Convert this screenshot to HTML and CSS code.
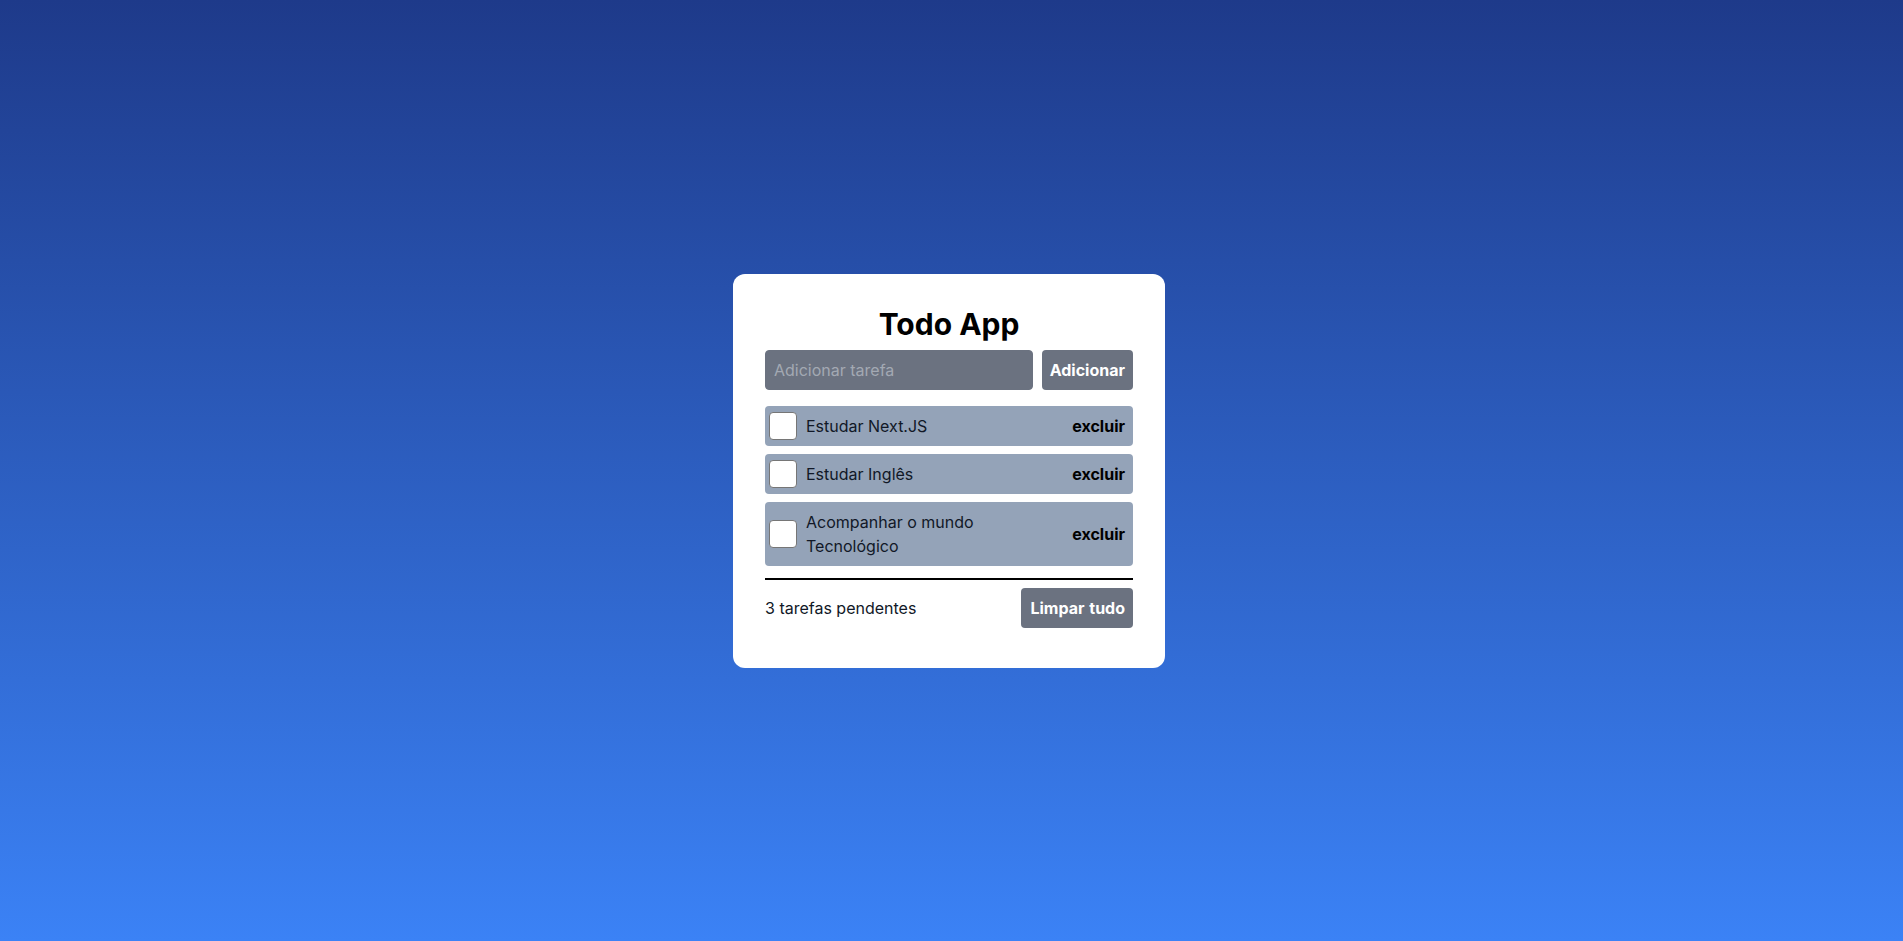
FILE: index.html
```html
<!DOCTYPE html>
<html lang="pt-BR">
<head>
<meta charset="utf-8">
<title>Todo App</title>
<link rel="stylesheet" href="styles.css">
</head>
<body>
<main class="card">
  <h1 class="title">Todo App</h1>
  <form class="add-form">
    <input class="add-input" type="text" placeholder="Adicionar tarefa">
    <button class="btn" type="button">Adicionar</button>
  </form>
  <ul class="list">
    <li class="item">
      <input class="check" type="checkbox">
      <span class="label">Estudar Next.JS</span>
      <button class="del" type="button">excluir</button>
    </li>
    <li class="item">
      <input class="check" type="checkbox">
      <span class="label">Estudar Inglês</span>
      <button class="del" type="button">excluir</button>
    </li>
    <li class="item">
      <input class="check" type="checkbox">
      <span class="label">Acompanhar o mundo Tecnológico</span>
      <button class="del" type="button">excluir</button>
    </li>
  </ul>
  <div class="footer">
    <span class="count">3 tarefas pendentes</span>
    <button class="btn btn-clear" type="button">Limpar tudo</button>
  </div>
</main>
</body>
</html>
```

FILE: styles.css
```css
* { box-sizing: border-box; }

html, body { height: 100%; }

body {
  margin: 0;
  min-height: 100vh;
  background: linear-gradient(to bottom, #1e3a8a, #3b82f6);
  display: flex;
  align-items: center;
  justify-content: center;
  font-family: Inter, "Noto Sans", sans-serif;
  font-size: 16px;
  line-height: 24px;
  color: #111827;
}

.card {
  background: #ffffff;
  border-radius: 12px;
  width: 432px;
  padding: 32px 32px 40px;
  margin-right: 5px;
}

.title {
  margin: 0 0 8px;
  font-size: 30px;
  line-height: 36px;
  font-weight: 700;
  text-align: center;
  color: #000;
}

.add-form {
  display: flex;
  gap: 9px;
  margin: 0;
}

.add-input {
  flex: 1;
  min-width: 0;
  height: 40px;
  background: #6b7280;
  border: 1px solid #6b7280;
  border-radius: 4px;
  padding: 0 8px;
  font-family: inherit;
  font-size: 16px;
  color: #fff;
  outline: none;
}

.add-input::placeholder { color: #a3a9b3; }

.btn {
  height: 40px;
  padding: 0 8px;
  background: #6b7280;
  color: #fff;
  border: none;
  border-radius: 4px;
  font-family: inherit;
  font-size: 16px;
  font-weight: 700;
}

.btn-clear { padding: 0 8px 0 9px; word-spacing: 1px; }

.list {
  list-style: none;
  margin: 16px 0 0;
  padding: 0 0 12px;
  border-bottom: 2px solid #000;
  display: flex;
  flex-direction: column;
  gap: 8px;
}

.item {
  display: flex;
  align-items: center;
  background: #94a3b8;
  border-radius: 4px;
  padding-left: 4px;
}

.check {
  appearance: none;
  -webkit-appearance: none;
  flex: none;
  width: 28px;
  height: 28px;
  margin: 0;
  background: #fff;
  border: 1px solid #767676;
  border-radius: 4px;
}

.label {
  flex: 1;
  min-width: 0;
  padding: 8px 8px 8px 9px;
  color: #111827;
  max-width: 250px;
}

.del {
  margin-left: auto;
  background: none;
  border: none;
  padding: 0 8px 0 0;
  font-family: inherit;
  font-size: 16px;
  font-weight: 700;
  color: #000;
}

.footer {
  margin-top: 8px;
  display: flex;
  align-items: center;
  justify-content: space-between;
}

.count { color: #111827; }
```
